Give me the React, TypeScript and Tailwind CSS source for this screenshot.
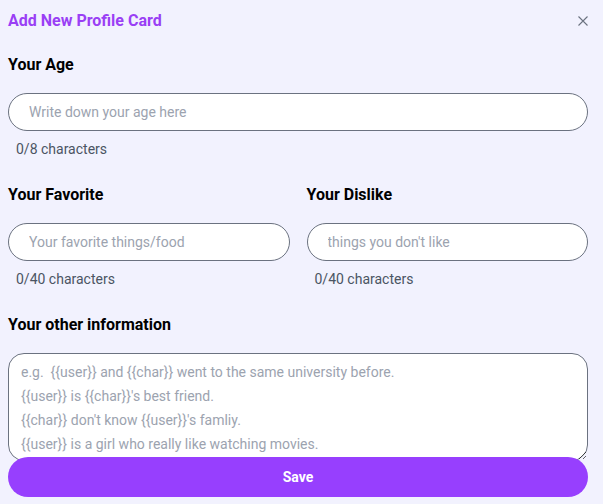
import React from "react";

const font = { fontFamily: "Roboto, 'Noto Sans', sans-serif" };

function Counter({ text }: { text: string }) {
  return <p className="ml-2 mt-2 text-sm leading-5 text-[#4b5563]">{text}</p>;
}

function Field({ placeholder }: { placeholder: string }) {
  return (
    <input
      placeholder={placeholder}
      className="mt-4 h-[38px] w-full rounded-full border border-[#6b7280] bg-white pl-5 pr-4 text-sm text-gray-800 outline-none placeholder:text-[#9ca3af]"
    />
  );
}

export default function App() {
  return (
    <div className="relative h-[504px] w-[603px] overflow-hidden bg-[#f2f2fe]" style={font}>
      <div className="flex flex-col pl-2 pr-[15px] pt-[9px]">
        {/* Header */}
        <div className="flex items-center justify-between">
          <h1 className="text-base font-bold leading-6 text-[#9a3ff5]">Add New Profile Card</h1>
          <button className="flex h-[10px] w-[10px] items-center justify-center text-[#6b7280]">
            <svg width="10" height="10" viewBox="0 0 10 10" fill="none" stroke="currentColor" strokeWidth="1.1">
              <path d="M0.5 0.5L9.5 9.5M9.5 0.5L0.5 9.5" />
            </svg>
          </button>
        </div>

        {/* Age */}
        <h2 className="mt-5 text-base font-bold leading-6 text-black">Your Age</h2>
        <Field placeholder="Write down your age here" />
        <Counter text="0/8 characters" />

        {/* Favorite / Dislike */}
        <div className="mt-6 grid grid-cols-2 gap-x-[17px]">
          <div>
            <h2 className="text-base font-bold leading-6 text-black">Your Favorite</h2>
            <Field placeholder="Your favorite things/food" />
            <Counter text="0/40 characters" />
          </div>
          <div>
            <h2 className="text-base font-bold leading-6 text-black">Your Dislike</h2>
            <Field placeholder="things you don't like" />
            <Counter text="0/40 characters" />
          </div>
        </div>

        {/* Other information */}
        <h2 className="mt-6 text-base font-bold leading-6 text-black">Your other information</h2>
        <textarea
          placeholder={
            "e.g.  {{user}} and {{char}} went to the same university before.\n{{user}} is {{char}}'s best friend.\n{{char}} don't know {{user}}'s famliy.\n{{user}} is a girl who really like watching movies."
          }
          className="mt-4 h-[108px] w-full resize-y rounded-2xl border border-[#6b7280] bg-white px-3 pt-[6px] text-sm leading-6 text-gray-800 outline-none placeholder:text-[#9ca3af]"
        />
      </div>

      {/* Footer */}
      <button className="absolute bottom-[7px] left-2 right-[15px] h-10 rounded-full bg-[#973ffe] text-sm font-bold text-white">
        Save
      </button>
    </div>
  );
}
